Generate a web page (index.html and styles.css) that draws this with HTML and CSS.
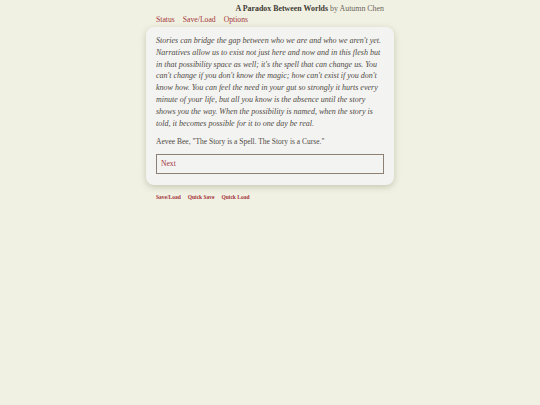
FILE: index.html
```html
<!DOCTYPE html>
<html>
<head>
<meta charset="utf-8">
<link rel="stylesheet" href="styles.css">
</head>
<body>
<div class="wrap">
  <header class="top">
    <div class="title"><b>A Paradox Between Worlds</b> <span class="by">by Autumn Chen</span></div>
    <nav class="nav"><a>Status</a><a>Save/Load</a><a>Options</a></nav>
  </header>
  <main class="card">
    <p class="quote">Stories can bridge the gap between who we are and who we aren't yet. Narratives allow us to exist not just here and now and in this flesh but in that possibility space as well; it's the spell that can change us. You can't change if you don't know the magic; how can't exist if you don't know how. You can feel the need in your gut so strongly it hurts every minute of your life, but all you know is the absence until the story shows you the way. When the possibility is named, when the story is told, it becomes possible for it to one day be real.</p>
    <p class="cite">Aevee Bee, "The Story is a Spell. The Story is a Curse."</p>
    <div class="next">Next</div>
  </main>
  <footer class="foot"><a>Save/Load</a><a>Quick Save</a><a>Quick Load</a></footer>
</div>
</body>
</html>
```
FILE: styles.css
```css
html, body { margin: 0; padding: 0; }
body {
  background: #f1f1e3;
  font-family: "Liberation Serif", serif;
  color: #4f4a43;
  width: 540px;
  height: 405px;
}
.wrap {
  width: 228px;
  margin: 0 auto;
  padding-top: 4px;
}
.title {
  text-align: right;
  font-size: 7.9px;
  line-height: 10px;
  color: #3f3a33;
}
.title .by { color: #6b655c; }
.nav {
  display: flex;
  gap: 8px;
  font-size: 7.7px;
  line-height: 12px;
  color: #a3353a;
}
.card {
  margin: 1px -10px 0;
  background: #f3f3f2;
  border-radius: 8px;
  box-shadow: 0 2px 6px rgba(120,120,90,0.35);
  padding: 8px 10px 11px;
}
.quote {
  margin: 0;
  font-style: italic;
  font-size: 8px;
  line-height: 11.8px;
}
.cite {
  margin: 7px 0 0;
  font-size: 7.5px;
  line-height: 11px;
}
.next {
  margin-top: 7px;
  border: 1px solid #8c7f74;
  height: 18px;
  line-height: 18px;
  padding: 0 4px;
  font-size: 7.6px;
  color: #a3353a;
}
.foot {
  display: flex;
  gap: 7px;
  margin-top: 8px;
  font-size: 5.5px;
  line-height: 8px;
  font-weight: bold;
  color: #a3353a;
}
```
